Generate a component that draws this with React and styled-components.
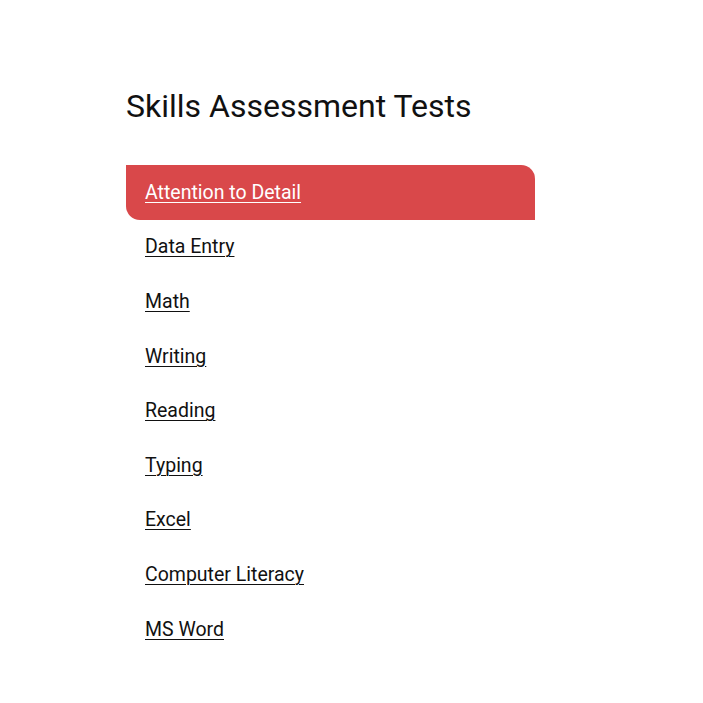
import React from "react";
import styled, { createGlobalStyle } from "styled-components";

const GlobalStyle = createGlobalStyle`
  body {
    margin: 0;
    background: #fff;
    font-family: Roboto, "Liberation Sans", sans-serif;
    color: #111;
  }
`;

const Page = styled.div`
  padding: 86px 0 0 126px;
`;

const Title = styled.h1`
  margin: 0 0 39px;
  font-size: 32px;
  font-weight: 400;
  line-height: 40px;
  color: #111;
`;

const TestList = styled.ul`
  list-style: none;
  margin: 0;
  padding: 0;
  width: 409px;
`;

const TestItem = styled.li`
  height: 54.6px;
  display: flex;
  align-items: center;
  padding-left: 19px;
  background: ${(p) => (p.$active ? "#d9484a" : "transparent")};
  border-radius: 0 14px 0 14px;
`;

const TestLink = styled.a`
  font-size: 19.5px;
  color: ${(p) => (p.$active ? "#fff" : "#111")};
  text-decoration: underline;
  text-underline-offset: 3px;
  text-decoration-thickness: 1px;
`;

const tests = [
  "Attention to Detail",
  "Data Entry",
  "Math",
  "Writing",
  "Reading",
  "Typing",
  "Excel",
  "Computer Literacy",
  "MS Word",
];

export default function App() {
  return (
    <>
      <GlobalStyle />
      <Page>
        <Title>Skills Assessment Tests</Title>
        <TestList>
          {tests.map((t, i) => (
            <TestItem key={t} $active={i === 0}>
              <TestLink href="#" $active={i === 0}>
                {t}
              </TestLink>
            </TestItem>
          ))}
        </TestList>
      </Page>
    </>
  );
}
